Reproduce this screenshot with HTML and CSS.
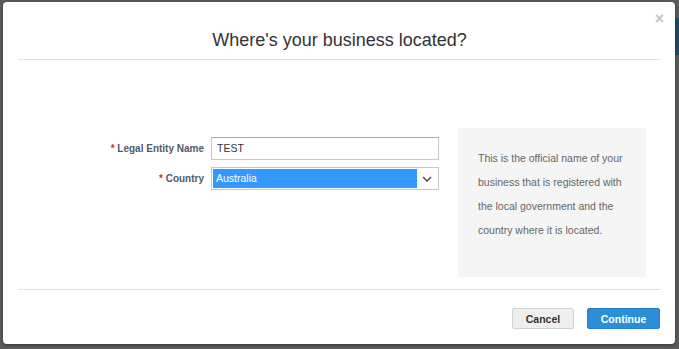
FILE: index.html
```html
<!DOCTYPE html>
<html>
<head>
<meta charset="utf-8">
<link rel="stylesheet" href="styles.css">
</head>
<body>
<div class="backdrop">
  <div class="bg-strip"></div>
  <div class="modal">
    <div class="modal-header">
      <h2 class="modal-title">Where's your business located?</h2>
      <span class="close">&times;</span>
    </div>
    <div class="modal-body">
      <div class="form">
        <label class="label"><span class="req">*</span> Legal Entity Name</label>
        <div class="input">TEST</div>
        <label class="label"><span class="req">*</span> Country</label>
        <div class="select">
          <span class="selected">Australia</span>
          <span class="caret">
            <svg width="10" height="6" viewBox="0 0 10 6"><path d="M1 1 L5 5 L9 1" fill="none" stroke="#555" stroke-width="1.6"/></svg>
          </span>
        </div>
      </div>
      <div class="info">
        This is the official name of your business that is registered with the local government and the country where it is located.
      </div>
    </div>
    <div class="modal-footer">
      <button class="btn btn-cancel">Cancel</button>
      <button class="btn btn-primary">Continue</button>
    </div>
  </div>
</div>
</body>
</html>
```
FILE: styles.css
```css
* { box-sizing: border-box; }
html, body { margin: 0; padding: 0; }
body {
  width: 679px;
  height: 349px;
  background: #5a5a5a;
  font-family: "Liberation Sans", Arial, sans-serif;
  overflow: hidden;
}
.backdrop {
  position: relative;
  width: 679px;
  height: 349px;
  padding: 2px 0 0 3px;
}
.bg-strip {
  position: absolute;
  right: 0;
  top: 18px;
  width: 6px;
  height: 37px;
  background: #1d4a66;
}
.modal {
  position: relative;
  width: 672px;
  height: 342px;
  background: #fff;
  border-radius: 4px;
  box-shadow: 0 1px 3px rgba(0,0,0,0.4);
  display: flex;
  flex-direction: column;
}
.modal-header {
  position: relative;
  margin: 0 14px 0 15px;
  padding: 27px 0 8px;
  border-bottom: 1px solid #e2e2e2;
  text-align: center;
}
.modal-title {
  margin: 0;
  font-size: 18px;
  line-height: 22px;
  font-weight: normal;
  color: #333;
}
.close {
  position: absolute;
  right: -3px;
  top: 9px;
  font-size: 16px;
  line-height: 16px;
  color: #c4c4c4;
  font-weight: bold;
}
.modal-body {
  margin: 0 14px 0 15px;
  padding: 68px 15px 12px 0;
  display: flex;
  gap: 19px;
  border-bottom: 1px solid #e2e2e2;
}
.form {
  width: 421px;
  padding-top: 9px;
  display: grid;
  grid-template-columns: 186px 228px;
  column-gap: 7px;
  row-gap: 7px;
  align-content: start;
  align-items: center;
}
.label {
  text-align: right;
  font-size: 10px;
  font-weight: bold;
  color: #4f5b68;
}
.req { color: #c0392b; }
.input {
  height: 23px;
  border: 1px solid #c8c8c8;
  border-top-color: #a8a8a8;
  padding: 0 5px;
  font-size: 10.5px;
  line-height: 21px;
  color: #333;
}
.select {
  height: 23px;
  border: 1px solid #c8c8c8;
  padding: 1px;
  display: flex;
  align-items: stretch;
}
.selected {
  flex: 1;
  background: #3399ff;
  color: #fff;
  font-size: 10.5px;
  line-height: 19px;
  padding-left: 3px;
}
.caret {
  width: 20px;
  display: flex;
  align-items: center;
  justify-content: center;
}
.info {
  width: 188px;
  height: 149px;
  background: #f5f5f5;
  padding: 18px 8px 18px 20px;
  font-size: 10.5px;
  line-height: 24px;
  color: #666;
}
.modal-footer {
  display: flex;
  justify-content: flex-end;
  gap: 13px;
  padding: 18px 15px 0 0;
}
.btn {
  height: 21px;
  border-radius: 2px;
  font-family: "Liberation Sans", Arial, sans-serif;
  font-size: 10.5px;
  font-weight: bold;
  padding: 0;
  cursor: pointer;
}
.btn-cancel {
  width: 62px;
  background: #efefef;
  border: 1px solid #d2d2d2;
  color: #333;
}
.btn-primary {
  width: 73px;
  background: #2a8fd6;
  border: 1px solid #2585c8;
  color: #fff;
}
```
